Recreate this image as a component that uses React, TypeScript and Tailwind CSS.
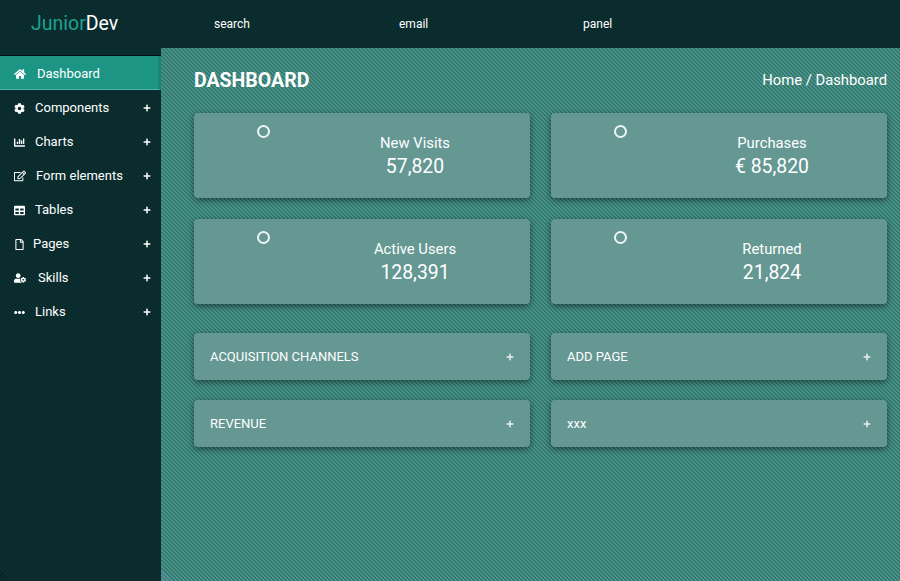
import { FaChartBar, FaCog, FaEllipsisH, FaHome, FaPlus, FaRegEdit, FaRegFile, FaTable, FaUserCog } from 'react-icons/fa'
import type { IconType } from 'react-icons'

type MenuItem = {
  label: string
  icon: IconType
  size: number
  offset: string
}

const menu: Array<MenuItem> = [
  { label: 'Components', icon: FaCog, size: 11, offset: 'ml-0' },
  { label: 'Charts', icon: FaChartBar, size: 11, offset: 'ml-0' },
  { label: 'Form elements', icon: FaRegEdit, size: 12, offset: 'ml-[1px]' },
  { label: 'Tables', icon: FaTable, size: 11, offset: 'ml-0' },
  { label: 'Pages', icon: FaRegFile, size: 11, offset: '-ml-[2px]' },
  { label: 'Skills', icon: FaUserCog, size: 12, offset: 'ml-[3px]' },
  { label: 'Links', icon: FaEllipsisH, size: 11, offset: 'ml-0' },
]

const stats = [
  { title: 'New Visits', value: '57,820' },
  { title: 'Purchases', value: '€ 85,820' },
  { title: 'Active Users', value: '128,391' },
  { title: 'Returned', value: '21,824' },
]

const panels = ['ACQUISITION CHANNELS', 'ADD PAGE', 'REVENUE', 'xxx']

const darkBg =
  'bg-[repeating-linear-gradient(45deg,#0d3133_0px,#0d3133_1.41px,#082728_1.41px,#082728_2.83px)]'
const mainBg =
  'bg-[repeating-linear-gradient(45deg,#25805c_0px,#25805c_1.41px,#588c9c_1.41px,#588c9c_2.83px)]'

function StatCard({ title, value }: { title: string; value: string }) {
  return (
    <div className="relative h-[85px] rounded-[4px] bg-[#659893] text-white shadow-[0_2px_6px_rgba(0,0,0,0.5)]">
      <span className="absolute left-[63px] top-[12px] h-[13px] w-[13px] rounded-full border-[2px] border-[#eef5f4]" />
      <div className="pl-[106px] pt-[21px] text-center">
        <div className="text-[14.8px] leading-[19px]">{title}</div>
        <div className="mt-[1px] text-[19.4px] leading-[26px]">{value}</div>
      </div>
    </div>
  )
}

function Panel({ title }: { title: string }) {
  return (
    <div className="flex h-[47px] items-center justify-between rounded-[4px] bg-[#659893] px-[16px] text-[13px] text-white shadow-[0_2px_6px_rgba(0,0,0,0.5)]">
      <span>{title}</span>
      <FaPlus size={8} className="opacity-85" />
    </div>
  )
}

export default function App() {
  return (
    <div className={`flex h-[581px] w-[900px] overflow-hidden font-['Roboto',sans-serif] text-white ${darkBg}`}>
      <aside className="w-[161px] shrink-0">
        <div className="flex h-[56px] items-center border-b border-[#03100f] pb-[8px] pl-[31px] text-[19.5px]">
          <span className="text-[#1fa08f]">Junior</span>
          <span>Dev</span>
        </div>
        <nav className="text-[13px]">
          <a className="flex h-[34px] items-center border-b border-[#4fb5a6] border-r-[3px] border-r-[#1a8577] bg-[#1c9585] pl-[14px] pt-[2px]">
            <FaHome size={12} className="w-[23px] pr-[11px]" />
            <span>Dashboard</span>
          </a>
          {menu.map((item) => (
            <a key={item.label} className="flex h-[34px] items-center pl-[14px] pr-[10px] pt-[2px]">
              <span className="w-[21px]">
                <item.icon size={item.size} />
              </span>
              <span className={item.offset}>{item.label}</span>
              <FaPlus size={8} className="ml-auto" />
            </a>
          ))}
        </nav>
      </aside>
      <div className="min-w-0 flex-1">
        <header className="flex h-[48px] items-center text-[12px]">
          <span className="ml-[53px] w-[185px]">search</span>
          <span className="w-[184px]">email</span>
          <span>panel</span>
        </header>
        <main className={`h-[533px] pl-[33px] pr-[13px] ${mainBg}`}>
          <div className="flex h-[65px] items-center justify-between">
            <h1 className="text-[19.5px] font-bold">DASHBOARD</h1>
            <div className="text-[14.8px]">Home / Dashboard</div>
          </div>
          <div className="grid grid-cols-2 gap-x-[21px] gap-y-[21px]">
            {stats.map((s) => (
              <StatCard key={s.title} title={s.title} value={s.value} />
            ))}
          </div>
          <div className="mt-[29px] grid grid-cols-2 gap-x-[21px] gap-y-[20px]">
            {panels.map((p) => (
              <Panel key={p} title={p} />
            ))}
          </div>
        </main>
      </div>
    </div>
  )
}
